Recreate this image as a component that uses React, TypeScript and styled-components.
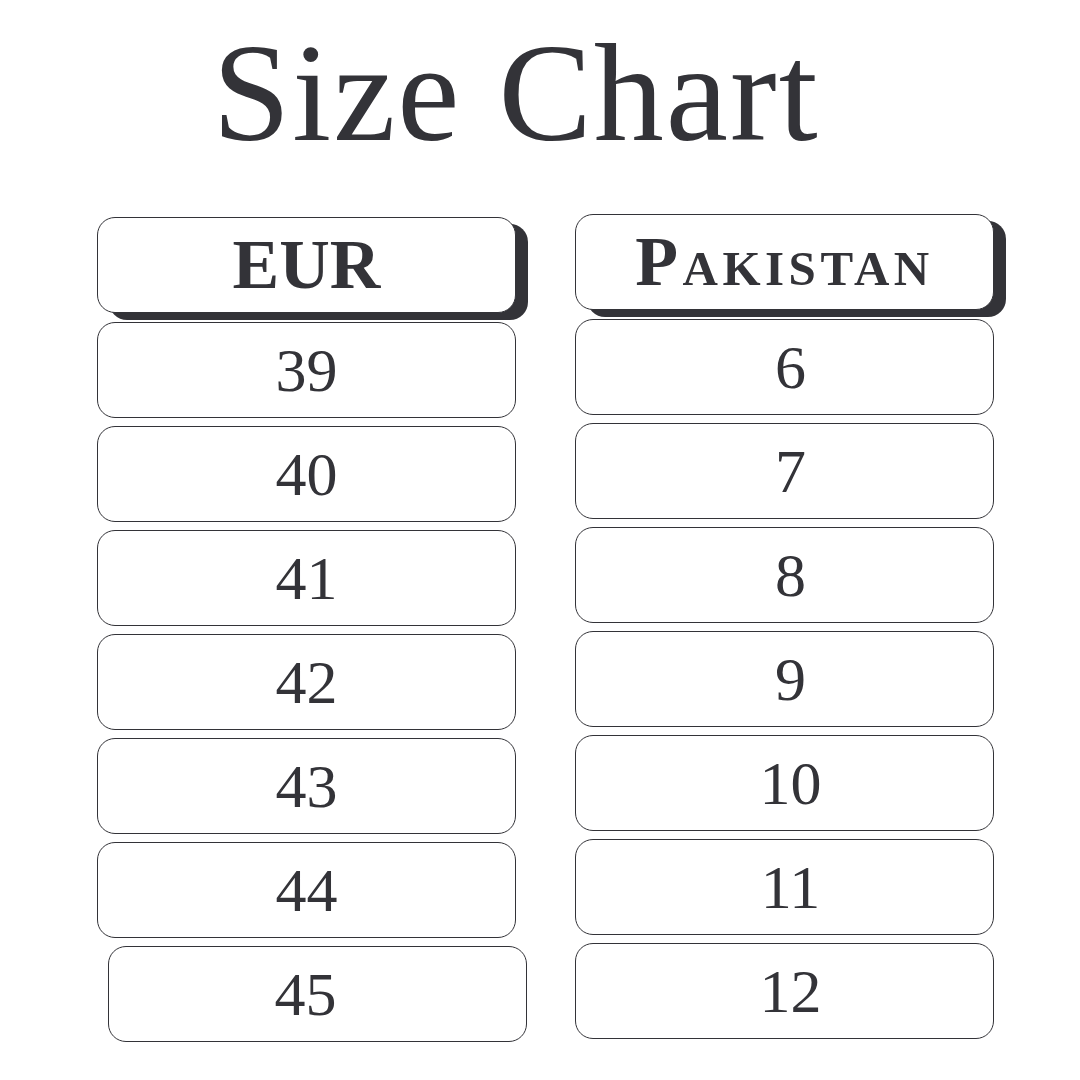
import styled, { createGlobalStyle } from "styled-components";

const GlobalStyle = createGlobalStyle`
  html, body {
    margin: 0;
    padding: 0;
    background: #ffffff;
  }
  body {
    font-family: "Liberation Serif", "DejaVu Serif", serif;
    color: #333338;
  }
`;

const Page = styled.div`
  width: 1080px;
  height: 1080px;
  display: flex;
  flex-direction: column;
  overflow: hidden;
`;

const Title = styled.h1`
  margin: 23px 0 0;
  padding-right: 48px;
  height: 140px;
  font-size: 140px;
  line-height: 140px;
  font-weight: 400;
  text-align: center;
  letter-spacing: 2px;
  color: #333338;
`;

const Columns = styled.div`
  display: flex;
  gap: 59px;
  padding-left: 97px;
`;

interface ColumnProps {
  top: number;
}
const Column = styled.div<ColumnProps>`
  width: 419px;
  margin-top: ${(props) => props.top}px;
  display: flex;
  flex-direction: column;
  gap: 8px;
`;

const Header = styled.div`
  box-sizing: border-box;
  height: 96px;
  display: flex;
  align-items: center;
  justify-content: center;
  border: 1px solid #333338;
  border-radius: 18px;
  background: #ffffff;
  box-shadow: 12px 7px 0 #333338;
  font-size: 70px;
  font-weight: 700;
  margin-bottom: 1px;
`;

interface HeaderTextProps {
  caps?: boolean;
}
const HeaderText = styled.span<HeaderTextProps>`
  font-variant: ${(props) => (props.caps ? "small-caps" : "normal")};
  letter-spacing: ${(props) => (props.caps ? "4.5px" : "0")};
  line-height: 1;
`;

interface CellProps {
  shift?: number;
  offset?: number;
}
const Cell = styled.div<CellProps>`
  box-sizing: border-box;
  width: 100%;
  height: 96px;
  display: flex;
  align-items: center;
  justify-content: center;
  border: 1px solid #333338;
  border-radius: 18px;
  margin-left: ${(props) => props.shift || 0}px;
  padding-left: ${(props) => Math.max(props.offset || 0, 0)}px;
  padding-right: ${(props) => Math.max(-(props.offset || 0), 0)}px;
  font-size: 62px;
  line-height: 1;
  color: #333338;
`;

const eur = ["39", "40", "41", "42", "43", "44", "45"];
const pakistan = ["6", "7", "8", "9", "10", "11", "12"];

export default function App() {
  return (
    <>
      <GlobalStyle />
      <Page>
        <Title>Size Chart</Title>
        <Columns>
          <Column top={54}>
            <Header>
              <HeaderText>EUR</HeaderText>
            </Header>
            {eur.map((size, i) =>
              i === eur.length - 1 ? (
                <Cell key={size} shift={11} offset={-24}>
                  {size}
                </Cell>
              ) : (
                <Cell key={size}>{size}</Cell>
              )
            )}
          </Column>
          <Column top={51}>
            <Header>
              <HeaderText caps>Pakistan</HeaderText>
            </Header>
            {pakistan.map((size) => (
              <Cell key={size} offset={12}>
                {size}
              </Cell>
            ))}
          </Column>
        </Columns>
      </Page>
    </>
  );
}
